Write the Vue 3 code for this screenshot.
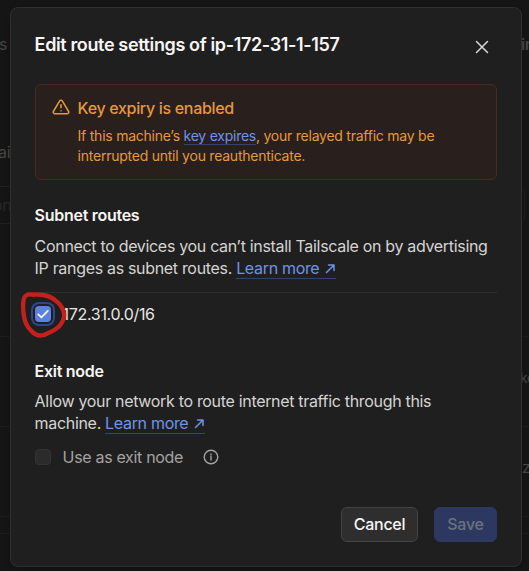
<script setup>
import { ref } from 'vue'

const subnetApproved = ref(true)
const routes = ['172.31.0.0/16']
</script>

<template>
  <main class="page">
    <div class="backdrop" aria-hidden="true">
      <span class="frag f1">s</span>
      <span class="frag f2">ai</span>
      <span class="frag f3">on</span>
      <span class="frag f4">in</span>
      <span class="frag f5">ko</span>
      <span class="frag f6">z</span>
      <i class="rule r1"></i>
      <i class="rule r2"></i>
      <i class="rule r3"></i>
      <i class="rule r4"></i>
      <i class="rule r5"></i>
      <i class="rule r6"></i>
      <i class="field"></i>
    </div>

    <section class="dialog" role="dialog">
      <header class="head">
        <h1>Edit route settings of ip-172-31-1-157</h1>
        <button class="close" aria-label="Close">
          <svg width="14" height="14" viewBox="0 0 14 14"><path d="M1.500 1.500 12.500 12.500M12.500 1.500 1.500 12.500" /></svg>
        </button>
      </header>

      <div class="alert">
        <svg class="warn" width="18" height="18" viewBox="0 0 24 24">
          <path d="M10.290 3.860 1.820 18a2 2 0 0 0 1.710 3h16.940a2 2 0 0 0 1.710-3L13.710 3.860a2 2 0 0 0-3.420 0z" />
          <path d="M12 9v4M12 17h.01" />
        </svg>
        <div>
          <h2>Key expiry is enabled</h2>
          <p>If this machine’s <a>key expires</a>, your relayed traffic may be<br />interrupted until you reauthenticate.</p>
        </div>
      </div>

      <section class="subnet">
        <h3>Subnet routes</h3>
        <p>
          Connect to devices you can’t install Tailscale on by advertising<br />IP ranges as subnet routes.
          <a>Learn more <svg class="ext" width="11" height="11" viewBox="0 0 11 11"><path d="M1.500 9.500 9 2M3.500 2H9v5.500" /></svg></a>
        </p>
        <div v-for="route in routes" :key="route" class="route">
          <span class="box" :class="{ checked: subnetApproved }">
            <svg v-if="subnetApproved" width="16" height="16" viewBox="0 0 16 16"><path d="M3.300 8.400 6.400 11.400 12.800 4.800" /></svg>
            <svg class="scribble" width="48" height="50" viewBox="0 0 48 50">
              <path d="M14 4.800C8 3.800 5 4.500 3.800 9C2.500 15 3 20 3.900 26C4.500 31 7 36.500 11 40.500C14 44 18 46 22 45.400C25 45 27 43.500 30 42.300C33 41 36.500 39 39.500 36C43.500 31 45 26 43.600 22C42.500 17 39.500 13.500 35.500 10.500C32 7.500 28 5.700 23 5C18 4.200 13 4.200 8 4.400" />
            </svg>
          </span>
          <span>{{ route }}</span>
        </div>
      </section>

      <section class="exit">
        <h3>Exit node</h3>
        <p>
          Allow your network to route internet traffic through this<br />machine.
          <a>Learn more <svg class="ext" width="11" height="11" viewBox="0 0 11 11"><path d="M1.500 9.500 9 2M3.500 2H9v5.500" /></svg></a>
        </p>
        <div class="option">
          <span class="box off"></span>
          <span>Use as exit node</span>
          <svg class="info" width="16" height="16" viewBox="0 0 16 16">
            <circle cx="8" cy="8" r="6.800" />
            <path d="M8 7.300v3.700M8 4.900v.8" />
          </svg>
        </div>
      </section>

      <footer class="actions">
        <button class="btn cancel">Cancel</button>
        <button class="btn save">Save</button>
      </footer>
    </section>
  </main>
</template>

<style>
body {
  margin: 0;
  background: #161616;
}
</style>

<style scoped>
.page {
  position: relative;
  box-sizing: border-box;
  width: 529px;
  height: 571px;
  padding: 7px 7px 4px 10px;
  overflow: hidden;
  background: #161616;
  font-family: Inter, sans-serif;
  font-size: 16px;
  line-height: 22px;
  letter-spacing: -0.32px;
  color: #d5d4d2;
}
.backdrop {
  position: absolute;
  inset: 0;
  color: #4a4a4a;
}
.frag { position: absolute; white-space: nowrap; }
.f1 { left: -1px; top: 33px; }
.f2 { left: -2px; top: 141px; }
.f3 { left: -7px; top: 194px; color: #292929; }
.f4 { left: 521px; top: 33px; font-weight: 600; }
.f5 { left: 520px; top: 367px; font-size: 14px; }
.f6 { left: 522px; top: 456px; }
.rule {
  position: absolute;
  left: 0;
  width: 100%;
  height: 1px;
  background: #1e1e1e;
}
.r1 { top: 186px; width: 12px; background: #232323; }
.r2 { top: 223px; width: 12px; background: #232323; }
.r3 { top: 336px; }
.r4 { top: 426px; }
.r5 { top: 516px; }
.r6 { top: 533px; }
.field {
  position: absolute;
  left: 500px;
  top: 187px;
  width: 23px;
  height: 34px;
  border: 1px solid #222;
  border-radius: 5px;
}
.dialog {
  position: relative;
  box-sizing: border-box;
  display: flex;
  flex-direction: column;
  width: 512px;
  height: 560px;
  padding: 24px;
  border: 1px solid #2f2f2f;
  border-radius: 8px;
  background: #1f1f1f;
  box-shadow: 0 4px 16px rgba(0, 0, 0, 0.25);
}
h1, h2, h3, p { margin: 0; }
h1, h3, .subnet p, .exit p { text-indent: 0; margin-left: -0.4px; }
.head {
  display: flex;
  justify-content: space-between;
  height: 52px;
}
h1 {
  font-size: 18px;
  font-weight: 600;
  line-height: 26px;
  letter-spacing: -0.37px;
  color: #f7f5f4;
}
.close {
  width: 30px;
  height: 30px;
  padding: 0;
  border: 0;
  background: none;
}
.close svg { display: block; margin: 8px; }
svg {
  fill: none;
  stroke: currentColor;
  stroke-linecap: round;
  stroke-linejoin: round;
}
.close svg { stroke: #dad9d7; stroke-width: 1.500; }
.alert {
  box-sizing: border-box;
  display: flex;
  gap: 7.600px;
  height: 96px;
  padding: 11px 16px;
  border: 1px solid #4a2a1b;
  border-radius: 6px;
  background: #291f1c;
  color: #e5993e;
}
.warn { flex: none; margin-top: 2px; stroke-width: 2; }
h2 {
  font-size: 16px;
  font-weight: 500;
  line-height: 24px;
}
.alert p {
  margin-top: 6px;
  font-size: 14px;
  line-height: 20px;
  letter-spacing: -0.24px;
  white-space: nowrap;
}
a {
  color: #6f93ea;
  border-bottom: 1px solid #35446d;
}
h3 {
  font-size: 16px;
  font-weight: 600;
  line-height: 22px;
  letter-spacing: -0.28px;
  color: #f7f5f4;
}
.subnet { padding-top: 24px; white-space: nowrap; }
.subnet p { margin-top: 9px; }
.ext { stroke-width: 1.500; margin-left: 1px; }
.route {
  display: flex;
  align-items: center;
  gap: 11.600px;
  box-sizing: border-box;
  height: 43px;
  margin-top: 13px;
  border-top: 1px solid #303030;
  color: #e8e6e4;
}
.box {
  position: relative;
  box-sizing: border-box;
  flex: none;
  width: 16px;
  height: 16px;
  border-radius: 4px;
}
.checked {
  z-index: 1;
  background: #5a82de;
  box-shadow: 0 0 0 2px #1f1f1f, 0 0 0 4px #2f4788;
}
.box svg { display: block; stroke: #fff; stroke-width: 1.700; }
.box .scribble {
  position: absolute;
  left: -15px;
  top: -16px;
  stroke: #c4211e;
  stroke-width: 4.300;
}
.exit { padding-top: 25px; white-space: nowrap; }
.exit p { margin-top: 8px; }
.option {
  display: flex;
  align-items: center;
  gap: 11.600px;
  height: 24px;
  margin-top: 11px;
  color: #a5a3a1;
}
.off { border: 1px solid #333; background: #2b2b2b; }
.info { margin-left: 8px; stroke-width: 1.400; }
.actions {
  display: flex;
  justify-content: flex-end;
  gap: 16px;
  margin-top: auto;
}
.btn {
  box-sizing: border-box;
  height: 35px;
  padding: 0 0 1px;
  border: 1px solid #434343;
  border-radius: 6px;
  font: 500 16px/22px Inter, sans-serif;
  letter-spacing: -0.25px;
}
.cancel { width: 77px; background: #2e2e2e; color: #f7f5f4; }
.save { width: 63px; background: #2c3860; border-color: #2c3860; color: #6c7080; }
</style>
